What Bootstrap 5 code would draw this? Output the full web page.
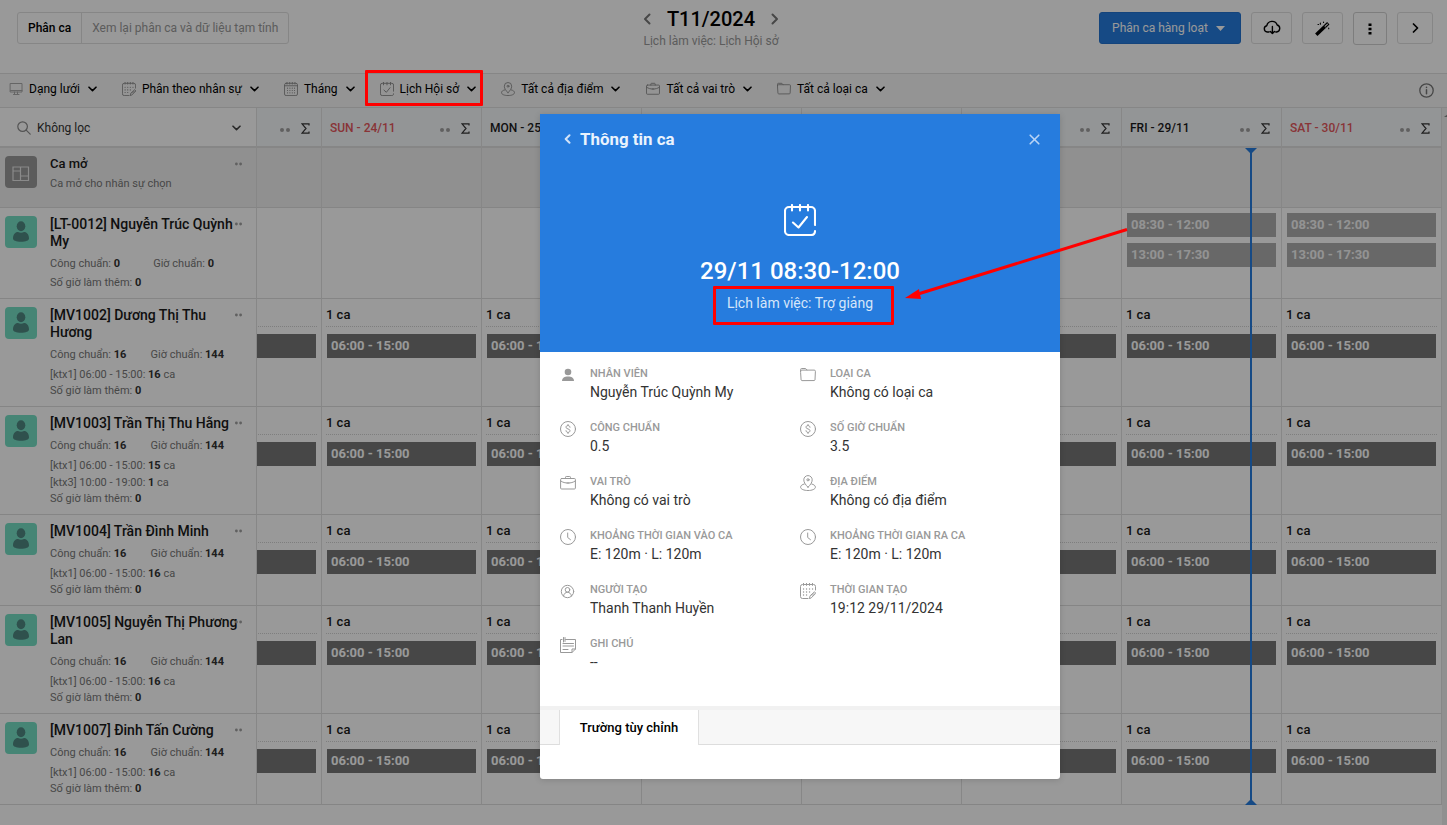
<!DOCTYPE html>
<html lang="vi">
<head>
<meta charset="utf-8">
<meta name="viewport" content="width=device-width, initial-scale=1">
<title>Phân ca T11/2024</title>
<link rel="stylesheet" href="https://cdn.jsdelivr.net/npm/bootstrap@5.3.0/dist/css/bootstrap.min.css">
<style>
  html, body { height: 825px; overflow: hidden; }
  body { font-family: Roboto, "Noto Sans", sans-serif; font-size: 13px; line-height: 16px; color: #1a1a1a; background: #fff; position: relative; fill: none; stroke: currentColor; stroke-linecap: round; stroke-linejoin: round; }
  svg { display: block; flex: none; }
  .fw-mid { font-weight: 500; }

  /* top bar */
  .topbar { height: 74px; border-bottom: 1px solid #e0e0e0; position: relative; }
  .tabs { margin: 12px 0 0 17px; height: 32px; border: 1px solid #e0e0e0; border-radius: 3px; }
  .tabs span { padding: 7px 10px; font-size: 12px; line-height: 16px; }
  .tabs span + span { border-left: 1px solid #e0e0e0; color: #999; }
  .period { position: absolute; left: 611px; width: 200px; top: 6px; }
  .period .t { font-size: 20px; line-height: 26px; font-weight: 500; color: #000; }
  .period .s { font-size: 12px; line-height: 14px; color: #999; margin-top: 2px; }
  .tools { margin: 12px 14px 0 auto; gap: 10px; }
  .tools .btn { height: 32px; padding: 0; border: 1px solid #e0e0e0; border-radius: 3px; color: #000; --bs-btn-line-height: 16px; }
  .tools .btn-main { width: 142px; padding-right: 3px; background: #267cde; border-color: #2272cf; color: #fff; font-size: 12px; }

  /* filters */
  .filters { height: 34px; background: #f7f7f7; border-bottom: 1px solid #dfdfdf; padding-left: 9px; color: #000; font-size: 12px; }
  .filters .f { margin-right: 25px; padding-bottom: 4px; }
  .filters .f .ic { color: #8c8c8c; margin-right: 6px; }
  .filters .f:first-child .ic { color: #a8a8a8; }
  .filters .f:nth-child(5) { margin-right: 26px; }
  .filters .f .cv { margin: 1px 0 0 8px; }

  /* grid */
  .sched { position: relative; height: 717px; }
  .line { display: grid; grid-template-columns: 257px 65px repeat(7, 160px); width: 1442px; }
  .line > div { border-right: 1px solid #e2e2e2; border-bottom: 1px solid #dedede; overflow: hidden; position: relative; min-width: 0; }
  .gutter { position: absolute; left: 1442px; top: 0; right: 0; bottom: 0; background: #f1f1f1; }
  .gutter svg { margin: 6px 0 0 2px; }
  .head > div { height: 40px; border-bottom: 2px solid #e0e0e0; background: #f6f8fb; font-weight: 500; font-size: 12px; padding: 2px 11px 0 8px; }
  .head > div:first-child { background: #fff; font-weight: 400; padding: 2px 15px 0 17px; color: #333; }
  .head .wk { color: #e4575c; }
  .dots2 { color: #a0a0a0; }
  .open > div { background: #f1f1f1; }
  .who { padding: 8px 0 0 50px; }
  .who .pic { position: absolute; left: 5px; top: 8px; width: 32px; height: 32px; border-radius: 4px; background: #75dec4; color: #4f8780; }
  .who .more { position: absolute; left: 235px; top: 14px; }
  .who .nm { font-size: 14px; line-height: 17px; font-weight: 500; width: 192px; }
  .who .d { font-size: 11px; line-height: 16px; color: #777; white-space: nowrap; }
  .who .d b { font-weight: 700; color: #333; }
  .who .d1 { margin-top: 6px; }
  .who .d1 span:last-child { position: absolute; right: 32px; }
  .cnt { margin: 0 4px; height: 28px; padding-top: 8px; border-bottom: 1px dotted #d2d2d2; font-weight: 500; }
  .slot { margin: 7px 5px 0; height: 24px; background: #777; color: #fff; font-weight: 700; line-height: 23px; padding-left: 4px; white-space: nowrap; }
  .slot.soft { background: #adadad; color: #f6f6f6; margin-top: 5px; }
  .slot.soft + .slot.soft { margin-top: 6px; }
  .cut .cnt { margin-left: 1px; } .cut .slot { margin-left: 0; }
  .now { position: absolute; left: 1250px; top: 40px; width: 2px; height: 657px; background: #267cde; }
  .now::before, .now::after { content: ""; position: absolute; left: -5px; border: 6px solid transparent; border-bottom-width: 0; border-top: 6px solid #267cde; }
  .now::after { bottom: 0; border-top: 0; border-bottom: 6px solid #267cde; }

  /* dialog */
  .veil { position: absolute; inset: 0; background: rgba(0,0,0,.4); padding: 114px 387px 46px 540px; }
  .dlg { height: 665px; background: #fff; border-radius: 0 0 3px 3px; overflow: hidden; box-shadow: 0 1px 6px rgba(0,0,0,.15); }
  .hero { height: 238px; background: #267cde; color: #fff; }
  .hero .bar { padding: 15px 20px 0 24px; height: 88px; }
  .hero .bar .t { font-size: 16.9px; line-height: 20px; font-weight: 700; color: #eaf3fd; margin-left: 9px; }
  .hero .when { font-size: 24px; line-height: 28px; font-weight: 500; margin-top: 21px; }
  .hero .cal { font-size: 14px; line-height: 18px; color: #d6e6f9; margin-top: 9px; }
  .facts { height: 354px; padding: 14px 20px 0; display: grid; grid-template-columns: 240px 240px; grid-auto-rows: 54px; }
  .facts .it { color: #999; }
  .facts .it svg { margin: 1px 14px 0 0; }
  .facts .k { font-size: 11px; line-height: 16px; font-weight: 500; }
  .facts .v { font-size: 14px; line-height: 18px; color: #333; margin-top: 1px; }
  .xt { height: 39px; border-top: 4px solid #f1f1f1; background: #f7f7f7; border-bottom: 1px solid #ddd; padding-left: 19px; }
  .xt span { background: #fff; border: 1px solid #e0e0e0; border-width: 0 1px; height: 35px; width: 140px; line-height: 35px; font-weight: 500; color: #000; }

  /* annotations */
  .frame { position: absolute; border: 3px solid #f00; border-radius: 1px; }
  .f1 { left: 365px; top: 70px; width: 118px; height: 36px; }
  .f2 { left: 713px; top: 286px; width: 181px; height: 39px; }
  .arrow { position: absolute; left: 900px; top: 220px; }
</style>
</head>
<body>
<svg width="0" height="0" class="position-absolute">
  <symbol id="chev-d" viewBox="0 0 9 6"><path d="M1 1.2l3.5 3.4L8 1.2" stroke-width="1.6"/></symbol>
  <symbol id="monitor" viewBox="0 0 14 14"><path d="M1.500 1.500h11.500v8.500H1.500zM1.500 8.500h11.500M5.500 10v2M8.500 10v2M4.500 12.500h5.500"/></symbol>
  <symbol id="caledit" viewBox="0 0 16 16"><path d="M15.500 7V3.500a2 2 0 0 0-2-2h-11a2 2 0 0 0-2 2v10a2 2 0 0 0 2 2H8M3.500.4v2M6.500.4v2M9.500.4v2M12.500.4v2"/><path d="M3.500 6h.1M6.500 6h.1M9.500 6h.1M12.500 6h.1M3.500 9h.1M6.500 9h.1M9.500 9h.1M3.500 12h.1M6.500 12h.1" stroke-width="1.300"/><path d="M9.500 15.300l.6-2.500 4.400-4 1.300 1.500-4.300 4.300z M12 12.500l2-2"/></symbol>
  <symbol id="calgrid" viewBox="0 0 16 16"><rect x=".6" y="1.500" width="14.800" height="14" rx="1.800"/><path d="M3.500.4v2M6.500.4v2M9.500.4v2M12.500.4v2M.6 4.300h14.800"/><path d="M4 7h.1M6.700 7h.1M9.400 7h.1M12 7h.1M4 9.700h.1M6.700 9.700h.1M9.400 9.700h.1M12 9.700h.1M4 12.400h.1M6.700 12.400h.1M9.400 12.400h.1M12 12.400h.1" stroke-width="1.200"/></symbol>
  <symbol id="calcheck" viewBox="0 0 32 32"><path d="M31 21V7a4 4 0 0 0-4-4H5a4 4 0 0 0-4 4v20a4 4 0 0 0 4 4h22c2.500 0 4-1.500 4-4M8 1v5.500M16 1v5.500M24 1v5.500M9 18.500l5.500 5L23 13"/></symbol>
  <symbol id="pin" viewBox="0 0 16 16"><path d="M8 12.200C5.700 10 3.800 7.500 3.800 4.800a4.200 4.200 0 0 1 8.400 0c0 2.700-1.900 5.200-4.200 7.400z"/><circle cx="8" cy="4.800" r="1.100"/><path d="M4.300 9C2 9.500.6 10.700.6 12.200c0 2 3.400 3.300 7.400 3.300s7.400-1.300 7.400-3.300c0-1.500-1.400-2.700-3.700-3.200"/></symbol>
  <symbol id="case" viewBox="0 0 16 16"><rect x=".6" y="3.500" width="14.800" height="10.500" rx="1"/><path d="M5.500 3.500V2.300a.8.8 0 0 1 .8-.8h3.400a.8.8 0 0 1 .8.8v1.200M.8 6c2 1.500 4.500 2 7.200 2s5.200-.5 7.200-2M7 8h2"/></symbol>
  <symbol id="folder" viewBox="0 0 16 16"><path d="M1.600 13.500a.8.8 0 0 1-.5-.6L.6 5.500v-3a1 1 0 0 1 1-1h4l1.300 1.600h7.300a1.200 1.200 0 0 1 1.200 1.200L15 12.900a.7.7 0 0 1-.6.6zM.6 4.700v-.4a1.200 1.200 0 0 1 1.200-1.200h5"/></symbol>
  <symbol id="clock" viewBox="0 0 16 16"><circle cx="8" cy="8" r="7.500"/><path d="M7.700 4v4.500l2.800 2.200"/></symbol>
  <symbol id="coin" viewBox="0 0 16 16"><circle cx="8" cy="8" r="7.500"/><path d="M10 6.300c0-1-.8-1.700-2-1.700s-2 .6-2 1.600c0 2.200 4 1.300 4 3.500 0 1-.9 1.700-2 1.700s-2-.7-2-1.700M8 3.500v1M8 11.500v1" /></symbol>
  <symbol id="usr" viewBox="0 0 16 16"><g fill="currentColor" stroke="none"><circle cx="8" cy="5" r="3.300"/><path d="M2 14c0-3.200 2.600-4.500 6-4.500s6 1.300 6 4.500z"/></g></symbol>
  <symbol id="usrc" viewBox="0 0 16 16"><circle cx="7.500" cy="8.500" r="6.200"/><circle cx="7.500" cy="6.800" r="2.300"/><path d="M3.500 13c.5-2.500 2-3.700 4-3.700s3.500 1.200 4 3.700"/></symbol>
  <symbol id="note" viewBox="0 0 16 16"><path d="M5.500 2.500h10V12l-3.500 3.500H.5v-13h1.500M15.500 12H12v3.500M3.500.5v4.500M5 .5v4M3 6.500h10.500M3 9h10.500M3 12.500h5"/></symbol>
  <symbol id="avatar" viewBox="0 0 32 32"><g fill="currentColor" stroke="none"><ellipse cx="16" cy="10.200" rx="4.300" ry="5"/><path d="M8 22.500c0-5 3-6.500 5-6.500 2 1 4 1 6 0 2 0 5 1.500 5 6.500 0 2-3 3.200-8 3.200s-8-1.200-8-3.200z"/></g></symbol>
</svg>

<header class="topbar d-flex align-items-start">
  <div class="tabs d-flex"><span class="fw-mid text-black">Phân ca</span><span>Xem lại phân ca và dữ liệu tạm tính</span></div>
  <div class="period text-center">
    <div class="d-flex justify-content-center align-items-center">
      <svg width="8" height="12" viewBox="0 0 8 12" stroke="#777" stroke-width="2" class="me-3"><path d="M6.500 1.500L2 6l4.500 4.500"/></svg>
      <span class="t">T11/2024</span>
      <svg width="8" height="12" viewBox="0 0 8 12" stroke="#777" stroke-width="2" class="ms-3"><path d="M1.500 1.500L6 6l-4.500 4.500"/></svg>
    </div>
    <div class="s">Lịch làm việc: Lịch Hội sở</div>
  </div>
  <div class="tools d-flex">
    <button class="btn btn-main d-flex align-items-center justify-content-center">Phân ca hàng loạt<svg width="9" height="5" viewBox="0 0 9 5" class="ms-2"><path d="M0 0h9L4.500 5z" fill="#fff" stroke="none"/></svg></button>
    <button class="btn d-flex align-items-center justify-content-center" style="width:41px"><svg width="18" height="16" viewBox="0 0 18 16" stroke-width="1.400"><path d="M6 12H4.200a3.200 3.200 0 0 1-.4-6.300A5.400 5.400 0 0 1 14.200 5a3.600 3.600 0 0 1-.6 7h-.8M9.400 6.500v7M7.300 11.500l2.100 2.100 2.100-2.100"/></svg></button>
    <button class="btn d-flex align-items-center justify-content-center" style="width:41px"><svg width="15" height="15" viewBox="0 0 14 14"><path d="M1.200 12.800L9 5.400" stroke-width="3.200" stroke-linecap="butt"/><path d="M9 5.400l3.400-3.200" stroke-width="3.200" stroke-linecap="butt"/><path d="M9.600 4.800l2-1.900" stroke="#fff" stroke-width="1"/><path d="M5 1.800v1.200M8 1v.4M2.800 3.200h.5M12.800 6.500v.8" stroke-width="1"/></svg></button>
    <button class="btn d-flex align-items-center justify-content-center" style="width:34px;height:33px;border-color:#d0d0d0"><svg width="4" height="12" viewBox="0 0 4 12"><path d="M.5 .5h3v2.500h-3zM.5 4.700h3v2.500h-3zM.5 9h3v2.500h-3z" fill="#000" stroke="none"/></svg></button>
    <button class="btn d-flex align-items-center justify-content-center" style="width:36px"><svg width="7" height="10" viewBox="0 0 7 10" stroke-width="1.700"><path d="M1.500 1L5.500 5l-4 4"/></svg></button>
  </div>
</header>

<nav class="filters d-flex align-items-center" id="filters"></nav>
<main class="sched" id="sched"></main>

<div class="veil">
  <section class="dlg">
    <div class="hero d-flex flex-column align-items-center">
      <div class="bar d-flex align-items-start w-100">
        <svg width="7" height="10" viewBox="0 0 7 10" stroke="#d0e2f8" stroke-width="2" style="margin-top:5px"><path d="M5.500 1.200L1.700 5l3.800 3.800"/></svg>
        <span class="t">Thông tin ca</span>
        <svg class="ms-auto" width="11" height="11" viewBox="0 0 11 11" stroke="#b9d4f5" stroke-width="1.600" style="margin-top:5px"><path d="M1.200 1.200l8.600 8.600M9.800 1.200L1.200 9.800"/></svg>
      </div>
      <svg width="32" height="32" stroke-width="2.100" style="margin-top:2px"><use href="#calcheck"/></svg>
      <div class="when">29/11 08:30-12:00</div>
      <div class="cal">Lịch làm việc: Trợ giảng</div>
    </div>
    <div class="facts" id="facts"></div>
    <div class="xt"><span class="d-block text-center">Trường tùy chỉnh</span></div>
  </section>
</div>

<div class="frame f1"></div>
<div class="frame f2"></div>
<svg class="arrow" width="230" height="82" viewBox="0 0 230 82"><path d="M227 9.500L18 74" stroke="#f00" stroke-width="3" stroke-linecap="butt"/><path d="M5 78l14-9 2 10z" fill="#f00" stroke="none"/></svg>

<script>
const use = (id, s, w) => `<svg width="${s}" height="${s}" stroke-width="${w}"><use href="#${id}"/></svg>`;

document.getElementById('filters').innerHTML = [
  ['monitor', 'Dạng lưới', 1], ['caledit', 'Phân theo nhân sự', 1], ['calgrid', 'Tháng', 1], ['calcheck', 'Lịch Hội sở', 2.2],
  ['pin', 'Tất cả địa điểm', 1], ['case', 'Tất cả vai trò', 1], ['folder', 'Tất cả loại ca', 1]
].map(([i, t, w]) => `<div class="f d-flex align-items-center"><span class="ic">${use(i, 14, w)}</span>${t}<svg class="cv" width="9" height="6"><use href="#chev-d"/></svg></div>`).join('')
 + `<svg class="ms-auto" style="margin-right:13px" width="15" height="15" viewBox="0 0 15 15" stroke="#777" stroke-width="1.300"><circle cx="7.500" cy="7.500" r="6.700"/><path d="M7.500 6.800v4M7.500 4.200v.3" stroke-width="1.500"/></svg>`;

// columns fully behind the dialog carry no labels
const days = [['', 0], ['SUN - 24/11', 1], ['MON - 25/11', 0], ['', 0], ['', 0], ['', 0], ['FRI - 29/11', 0], ['SAT - 30/11', 1]];
const dots = (w, r, c = '') => `<svg class="dots2 ${c}" width="${w}" height="4" viewBox="0 0 ${w} 4"><g fill="currentColor" stroke="none"><circle cx="${r}" cy="2" r="${r}"/><circle cx="${w - r}" cy="2" r="${r}"/></g></svg>`;
const sigma = `<svg width="9" height="11" viewBox="0 0 9 11" stroke="#333" stroke-width="1.200" style="margin-left:11px" stroke-linecap="butt"><path d="M8 2.500V.8H1L5 5.500 1 10.200h7V8.500" stroke-linejoin="miter"/></svg>`;
let html = '<div class="gutter"><svg width="4" height="3" viewBox="0 0 4 3"><path d="M0 3l4-3v3z" fill="#888" stroke="none"/></svg></div><div class="line head"><div class="d-flex align-items-center"><svg width="14" height="14" viewBox="0 0 14 14" stroke="#8c8c8c" stroke-width="1.200"><circle cx="5.600" cy="5.600" r="4.800"/><path d="M9.200 9.200l4 4"/></svg><span style="margin-left:6px">Không lọc</span><svg class="ms-auto" width="9" height="6" stroke="#444"><use href="#chev-d"/></svg></div>'
 + days.map(([d, w]) => `<div class="d-flex align-items-center"><span class="${w ? 'wk' : ''}">${d}</span><span class="ms-auto pt-1">${dots(10, 2)}</span>${sigma}</div>`).join('') + '</div>';

html += '<div class="line open"><div class="who" style="height:60px"><span class="pic d-flex align-items-center justify-content-center" style="background:#999"><svg width="18" height="16" viewBox="0 0 18 16" stroke="#e6e6e6" stroke-width="1.200" class="mt-1"><path d="M1 1h15.500v13.500H1zM1 5h7.500M8.500 1v13.500M8.500 10h8" stroke-linejoin="miter"/></svg></span><span class="more">' + dots(7, 1.4) + '</span><div style="font-size:13px;line-height:16px" class="fw-mid">Ca mở</div><div class="d" style="margin-top:4px">Ca mở cho nhân sự chọn</div></div>' + '<div></div>'.repeat(8) + '</div>';

const people = [
  [91, '[LT-0012] Nguyễn Trúc Quỳnh<br>My', 0, 0, []],
  [108, '[MV1002] Dương Thị Thu<br>Hương', 16, 144, ['[ktx1] 06:00 - 15:00: <b>16</b> ca']],
  [108, '[MV1003] Trần Thị Thu Hằng', 16, 144, ['[ktx1] 06:00 - 15:00: <b>15</b> ca', '[ktx3] 10:00 - 19:00: <b>1</b> ca']],
  [91, '[MV1004] Trần Đình Minh', 16, 144, ['[ktx1] 06:00 - 15:00: <b>16</b> ca']],
  [108, '[MV1005] Nguyễn Thị Phương<br>Lan', 16, 144, ['[ktx1] 06:00 - 15:00: <b>16</b> ca']],
  [91, '[MV1007] Đinh Tấn Cường', 16, 144, ['[ktx1] 06:00 - 15:00: <b>16</b> ca']]
];
people.forEach(([h, n, c, g, k], i) => {
  html += `<div class="line"><div class="who" style="height:${h}px"><span class="pic">${use('avatar', 32, 1)}</span><span class="more">${dots(7, 1.4)}</span><div class="nm text-nowrap">${n}</div>
  <div class="d d1 d-flex"><span>Công chuẩn: <b>${c}</b></span><span style="right:${i ? 32 : 42}px">Giờ chuẩn: <b>${g}</b></span></div>
  <div style="margin-top:3px">${k.map(x => `<div class="d" style="line-height:17px">${x}</div>`).join('')}<div class="d">Số giờ làm thêm: <b>${c && 0}</b></div></div></div>`;
  days.forEach((d, j) => {
    const label = d[0];
    if (i) html += `<div class="${j ? '' : 'cut'}"><div class="cnt">${label ? '1 ca' : ''}</div><div class="slot">${label ? '06:00 - 15:00' : ''}</div></div>`;
    else html += '<div>' + (j > 5 ? '<div class="slot soft">08:30 - 12:00</div><div class="slot soft">13:00 - 17:30</div>' : '') + '</div>';
  });
  html += '</div>';
});
document.getElementById('sched').innerHTML = html + '<div class="now"></div>';

document.getElementById('facts').innerHTML = [
  ['usr', 'NHÂN VIÊN', 'Nguyễn Trúc Quỳnh My'], ['folder', 'LOẠI CA', 'Không có loại ca'],
  ['coin', 'CÔNG CHUẨN', '0.5'], ['coin', 'SỐ GIỜ CHUẨN', '3.5'],
  ['case', 'VAI TRÒ', 'Không có vai trò'], ['pin', 'ĐỊA ĐIỂM', 'Không có địa điểm'],
  ['clock', 'KHOẢNG THỜI GIAN VÀO CA', 'E: 120m · L: 120m'], ['clock', 'KHOẢNG THỜI GIAN RA CA', 'E: 120m · L: 120m'],
  ['usrc', 'NGƯỜI TẠO', 'Thanh Thanh Huyền'], ['caledit', 'THỜI GIAN TẠO', '19:12 29/11/2024'],
  ['note', 'GHI CHÚ', '--']
].map(([i, k, v]) => `<div class="it d-flex align-items-start">${use(i, 16, 1)}<div><div class="k">${k}</div><div class="v">${v}</div></div></div>`).join('');
</script>
<script src="https://cdn.jsdelivr.net/npm/bootstrap@5.3.0/dist/js/bootstrap.bundle.min.js"></script>
</body>
</html>
